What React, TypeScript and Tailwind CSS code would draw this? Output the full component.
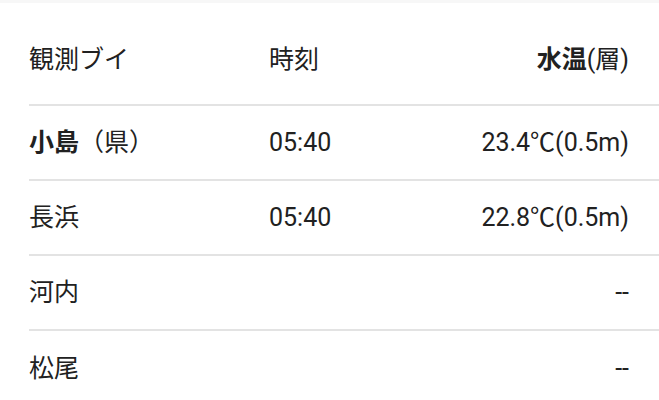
import React from "react";

const font = { fontFamily: 'Roboto, "Noto Sans CJK JP", sans-serif' };

type Row = { name: React.ReactNode; time: string; temp: string };

const rows: Row[] = [
  {
    name: (
      <>
        <span className="font-bold">小島</span>
        <span>（県）</span>
      </>
    ),
    time: "05:40",
    temp: "23.4℃(0.5m)",
  },
  { name: "長浜", time: "05:40", temp: "22.8℃(0.5m)" },
  { name: "河内", time: "", temp: "--" },
  { name: "松尾", time: "", temp: "--" },
];

export default function App() {
  return (
    <div className="w-[659px] h-[400px] bg-white overflow-hidden text-[#212121] text-[25px]" style={font}>
      <div className="h-[3px] bg-[#f7f7f7]" />
      <div className="pl-[29px]">
        <div className="grid grid-cols-[240px_1fr_auto] items-center h-[103px] pr-[30px] border-b-2 border-[#e3e3e3] pt-[12px]">
          <div>観測ブイ</div>
          <div>時刻</div>
          <div className="text-right">
            <span className="font-bold">水温</span>(層)
          </div>
        </div>
        {rows.map((r, i) => (
          <div
            key={i}
            className={`grid grid-cols-[240px_1fr_auto] items-center h-[75px] pr-[30px] ${
              i < rows.length - 1 ? "border-b-2 border-[#e3e3e3]" : ""
            }`}
          >
            <div>{r.name}</div>
            <div>{r.time}</div>
            <div className="text-right">{r.temp}</div>
          </div>
        ))}
      </div>
    </div>
  );
}
